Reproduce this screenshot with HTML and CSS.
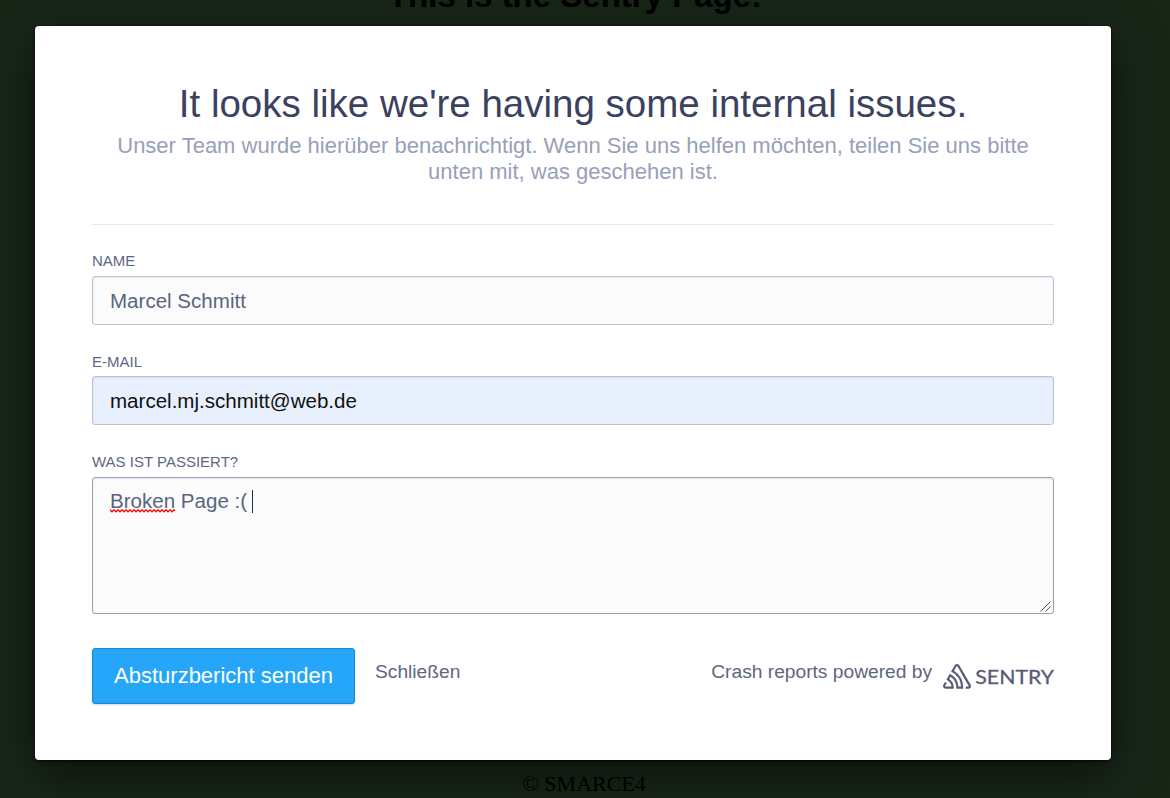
FILE: index.html
```html
<!DOCTYPE html>
<html lang="de">
<head>
<meta charset="utf-8">
<title>Sentry Page</title>
<link rel="stylesheet" href="styles.css">
</head>
<body>
<div class="page">
  <h1 class="page-title">This is the Sentry Page!</h1>
  <div class="dialog">
    <header class="head">
      <h2 class="title">It looks like we're having some internal issues.</h2>
      <p class="lead">Unser Team wurde hierüber benachrichtigt. Wenn Sie uns helfen möchten, teilen Sie uns bitte<br>unten mit, was geschehen ist.</p>
    </header>
    <div class="field">
      <span class="label">NAME</span>
      <div class="input">Marcel Schmitt</div>
    </div>
    <div class="field">
      <span class="label">E-MAIL</span>
      <div class="input autofill">marcel.mj.schmitt@web.de</div>
    </div>
    <div class="field">
      <span class="label">WAS IST PASSIERT?</span>
      <div class="input area"><span class="misspelled">Broken<svg class="squiggle" width="66" height="4" viewBox="0 0 66 4"><path d="M0 .8L2 2.8L4 .8L6 2.8L8 .8L10 2.8L12 .8L14 2.8L16 .8L18 2.8L20 .8L22 2.8L24 .8L26 2.8L28 .8L30 2.8L32 .8L34 2.8L36 .8L38 2.8L40 .8L42 2.8L44 .8L46 2.8L48 .8L50 2.8L52 .8L54 2.8L56 .8L58 2.8L60 .8L62 2.8L64 .8L65 1.8" fill="none" stroke="#f00" stroke-width="1.3"/></svg></span> Page :(<span class="caret"></span>
        <svg class="grip" width="11" height="11" viewBox="0 0 11 11"><path d="M.5 10.5L10.5.5M5.5 10.5L10.5 5.5" stroke="#555" stroke-width="1"/></svg>
      </div>
    </div>
    <footer class="actions">
      <span class="submit">Absturzbericht senden</span>
      <span class="close">Schließen</span>
      <span class="powered">Crash reports powered by</span>
      <svg class="logo" width="112" height="26" viewBox="0 0 112 26">
        <path transform="translate(1 0) scale(.56)" d="M29,2.26a4.67,4.67,0,0,0-8,0L14.42,13.53A32.21,32.21,0,0,1,32.17,40.19H27.55A27.68,27.68,0,0,0,12.09,17.47L6,28a15.92,15.92,0,0,1,9.23,12.17H4.62A.76.76,0,0,1,4,39.06l2.94-5a10.74,10.74,0,0,0-3.36-1.9l-2.91,5a4.54,4.54,0,0,0,1.69,6.24A4.66,4.66,0,0,0,4.62,44H19.15a19.4,19.4,0,0,0-8-17.31l2.31-4A23.87,23.87,0,0,1,23.76,44H36.07a35.88,35.88,0,0,0-16.41-31.8l4.67-8a.77.77,0,0,1,1.05-.27c.53.29,20.29,34.77,20.66,35.17a.76.76,0,0,1-.68,1.13H40.6q.09,1.91,0,3.81h4.78A4.59,4.59,0,0,0,50,39.43a4.49,4.49,0,0,0-.62-2.28Z"/>
        <text class="wordmark" x="33.3" y="19.6" textLength="78.7" lengthAdjust="spacingAndGlyphs">SENTRY</text>
      </svg>
    </footer>
  </div>
  <p class="copyright">© SMARCE4</p>
</div>
</body>
</html>
```
FILE: styles.css
```css
* { box-sizing: border-box; }
body { margin: 0; background: #182618; font-family: "Liberation Sans", Arial, sans-serif; overflow: hidden; }
.page { height: 798px; overflow: hidden; display: flex; flex-direction: column; }
.page-title { margin: -26px 20px 0 0; height: 52px; flex: none; padding-top: 3px; font-size: 33px; line-height: 37px; text-align: center; color: #000; }
.dialog {
  flex: none; width: 1076px; height: 734px; margin-left: 35px; padding: 56px 57px;
  background: #fff; border-radius: 4px; position: relative;
  box-shadow: 0 0 0 1px rgba(0,0,0,.2), 0 2px 3px rgba(0,0,0,.5), 0 15px 50px rgba(0,0,0,.5);
}
.head { height: 143px; border-bottom: 1px solid #e5e7ef; text-align: center; white-space: nowrap; margin-bottom: 26px; }
.title { margin: 0; font-size: 38.5px; font-weight: 400; line-height: 44px; color: #3a4260; }
.lead { margin: 7px 0 0; font-size: 22px; line-height: 26px; color: #97a0b9; }
.field { display: flex; flex-direction: column; margin-bottom: 27px; }
.label { font-size: 15px; line-height: 20px; height: 24.5px; color: #5d6785; }
.input {
  height: 49px; padding: 0 17px; border: 1px solid #b9c2d9; border-radius: 3px; background: #fbfbfb;
  box-shadow: inset 0 1px 2px rgba(0,0,0,.08); color: #596580; font-size: 20.55px; line-height: 48px;
}
.autofill { background: #e8effd; color: #111; }
.area { height: 137px; border-color: #97a0b9; position: relative; line-height: 46px; }
.misspelled { position: relative; }
.squiggle { position: absolute; left: 0; bottom: -1px; }
.caret { display: inline-block; width: 1px; height: 23px; margin-left: 5px; background: #222b44; vertical-align: -5px; }
.grip { position: absolute; right: 2px; bottom: 1px; }
.actions { display: flex; align-items: flex-start; margin-top: 34px; white-space: nowrap; }
.submit {
  width: 263px; height: 56px; border: 1px solid #1f87d0; border-radius: 3px; background: #26a6f8;
  box-shadow: 0 1px 2px rgba(0,0,0,.15); color: #fff; font-size: 22px; line-height: 54px; text-align: center;
}
.close, .powered { font-size: 19.2px; line-height: 24px; padding-top: 12px; color: #5d6681; }
.close { margin-left: 20px; }
.powered { margin-left: auto; }
.logo { margin: 16px 0 0 10px; fill: #585c74; }
.wordmark { font-family: Lato, sans-serif; font-size: 20px; font-weight: 400; stroke: #585c74; stroke-width: .3px; }
.copyright { margin: 11px 2px 0 0; text-align: center; font: 22px/26px "Liberation Serif", "Times New Roman", serif; color: #000; }
```
